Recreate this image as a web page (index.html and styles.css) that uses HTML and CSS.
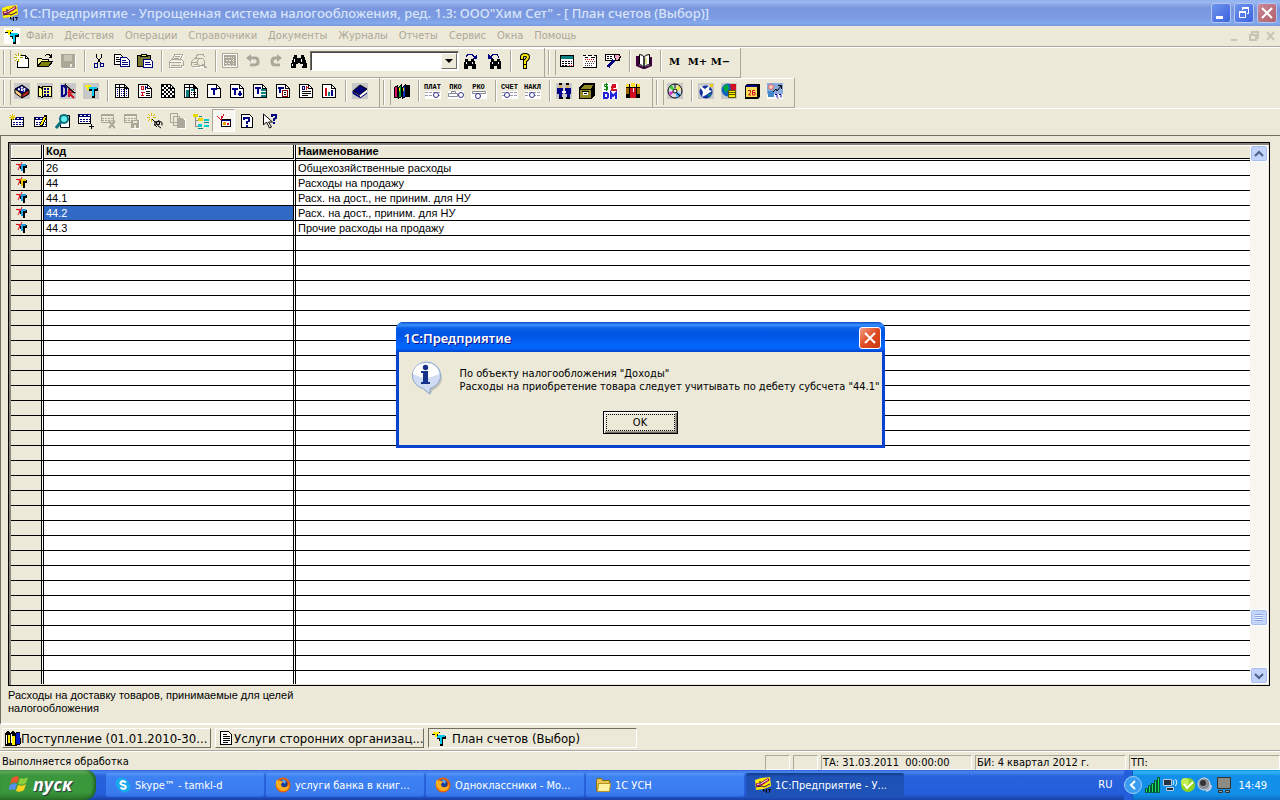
FILE: index.html
```html
<!DOCTYPE html>
<html lang="ru">
<head>
  <meta charset="UTF-8">
  <meta name="viewport" content="width=device-width, initial-scale=1.0">
  <title>1С:Предприятие</title>
  <link rel="stylesheet" href="styles.css">
</head>
<body>

<!-- icon sprite -->
<svg class="sprite" aria-hidden="true">
  <symbol id="logo" viewBox="0 0 16 16"><path fill="#fe0" d="M0 3l6-2 9-1 1 9-7 3-8 1z"/><path stroke="#a01050" stroke-width="3" d="M1 8l5-1 8-5"/><path stroke="#fff" d="M2 7.500l4-1 7-4"/><path stroke="#306" fill="none" d="M1 10l6-1 2 1 6-3M5 4v3"/><path stroke="#000" fill="none" d="M8.500 12v2h2M11.500 16v-4M13 12.500h2.500l-1.500 3"/></symbol>
  <symbol id="acc" viewBox="0 0 16 16"><path fill="#000" d="M6 6h9v3h-3v7H9v-5H8V9H6z"/><path fill="#00c8f0" d="M6 5h8v2h-3v7H9V8H6z"/><path fill="#fe0" d="M2 2h6v2H6v3H4V4H2z"/><path stroke="#000" fill="none" d="M1 4.500h3M6.500 4v2M8 2.500h1"/></symbol>
  <symbol id="new" viewBox="0 0 16 16"><path fill="#fff" stroke="#000" d="M3.500 2.500h8l3 3v9h-11z"/><path fill="none" stroke="#000" d="M11.500 2.500v3h3"/><path fill="#ffffe0" d="M1 2h6v6H1z"/><path stroke="#b0a000" d="M4.500 0v3M4.500 6v3M0 4.500h3M6 4.500h3M1 1l2 2M8 1L6 3M1 8l2-2"/></symbol>
  <symbol id="open" viewBox="0 0 16 16"><path fill="#ff9" stroke="#000" d="M.5 13.500v-8h4l1 1h6v3"/><path fill="#808000" stroke="#000" d="M.5 13.500l4-5h11l-4 5z"/><path fill="none" stroke="#000" d="M8 2.500l2-1h2l2 2M14.500 1v3h-3"/></symbol>
  <symbol id="save" viewBox="0 0 16 16"><path fill="#fff" d="M2 2h14v14H3z"/><path fill="#aca899" d="M1 1h14v14H2l-1-1z"/><path fill="#c8c4b4" d="M4 2h8v6H4z"/><path fill="#ece9d8" d="M10 11h2v3h-2z"/></symbol>
  <symbol id="cut" viewBox="0 0 16 16"><path fill="none" stroke="#000" d="M5.500 1v3l4 6M10.500 1v3l-4 6"/><path fill="none" stroke="#000080" d="M3.500 10.500h3v4h-3zM9.500 10.500h3v3h-3z"/></symbol>
  <symbol id="copy" viewBox="0 0 16 16"><path fill="#fff" stroke="#000" d="M.5 1.500h6l2 2v8h-8z"/><path stroke="#000" d="M2 4.500h3M2 6.500h5M2 8.500h5"/><path fill="#fff" stroke="#000080" d="M6.500 4.500h6l3 3v6h-9z"/><path stroke="#000080" d="M8 7.500h4M8 9.500h6M8 11.500h6"/></symbol>
  <symbol id="paste" viewBox="0 0 16 16"><path fill="#7a7a30" stroke="#000" d="M.5 2.500h13v11H.5z"/><path fill="#ff6" stroke="#000" d="M3.500 3.500v-1l2-1h3l2 1v1z"/><path fill="#fff" stroke="#000080" d="M6.500 6.500h7l2 2v6h-9z"/><path stroke="#000080" d="M8 9.500h5M8 11.500h6"/></symbol>
  <symbol id="print" viewBox="0 0 16 16"><path fill="none" stroke="#fff" d="M5.500 7.500l2-5h8l-2 5M2.500 8.500h12l2 1v4h-3v2h-11z"/><path fill="none" stroke="#aca899" d="M4.500 6.500l2-5h8l-2 5M1.500 8.500l2-2h10l2 2v4h-2v2h-12zM1 9.500h12M3 12.500h9M7 3.500h5M6 5.500h5"/></symbol>
  <symbol id="preview" viewBox="0 0 16 16"><path fill="none" stroke="#fff" d="M2.500 14.500h11"/><path fill="none" stroke="#aca899" d="M4.500 5.500l2-4h6l1 3M.5 12.500v-4l3-3h5M1 9.500h6M1 13.500h8M3 11.500h4"/><circle cx="10" cy="9" r="3.500" fill="none" stroke="#aca899"/><path stroke="#aca899" stroke-width="2" d="M12 11l3 4"/></symbol>
  <symbol id="form" viewBox="0 0 16 16"><path fill="#fff" stroke="#aca899" d="M.5.500h15v14H.5z"/><path fill="#aca899" d="M2 2h12v11H2z"/><path stroke="#ece9d8" stroke-dasharray="2 1" d="M3 4.500h7M4 7.500h7M3 10.500h5M4 12.500h8"/><path stroke="#ece9d8" stroke-dasharray="1 1" d="M11.500 4v8"/></symbol>
  <symbol id="undo" viewBox="0 0 16 16"><path fill="none" stroke="#fff" stroke-width="2" d="M6 6h6v7H5"/><path fill="none" stroke="#aca899" stroke-width="3" d="M5 5h5q3 0 3 3.500T10 12H5"/><path fill="#aca899" d="M1 5l5-4v8z"/></symbol>
  <symbol id="redo" viewBox="0 0 16 16"><path fill="none" stroke="#fff" stroke-width="2" d="M12 13H6"/><path fill="none" stroke="#aca899" stroke-width="3" d="M10 5H7Q4 5 4 8.500T7 12h5"/><path fill="#aca899" d="M14 5L9 1v8z"/></symbol>
  <symbol id="find" viewBox="0 0 16 16"><path d="M3 2h3v3h4V2h3l1 4 2 5v4h-5v-4H9v-1H7v1H5v4H0v-4l2-5z"/><path stroke="#fff" d="M3.500 6v3M10.500 6v3M1.500 11v2M11.500 11v2"/></symbol>
  <symbol id="findnext" viewBox="0 0 16 16"><path d="M2 6h3v2h3V6h3l1 3 1 4v3H9v-3H5v3H1v-4z"/><path stroke="#fff" d="M3.500 9v2M9.500 9v2"/><path fill="none" stroke="#000080" d="M3 3.500l2-2h4l3 3"/><path fill="#000080" d="M14 1v5H9z"/></symbol>
  <symbol id="findprev" viewBox="0 0 16 16"><path d="M5 6h3v2h3V6h3l1 3v7h-4v-3H8v3H4v-4z"/><path stroke="#fff" d="M6.500 9v2M12.500 9v2"/><path fill="none" stroke="#000080" d="M13 4.500l-2-3H7l-3 3"/><path fill="#000080" d="M2 1v5h5z"/></symbol>
  <symbol id="help" viewBox="0 0 16 16"><path fill="none" stroke="#000" stroke-width="4" stroke-linecap="square" d="M5 5V4q0-2 3-2t3 2-3 4v2M8 13v1"/><path fill="none" stroke="#fe0" stroke-width="2" stroke-linecap="square" d="M5 5V4q0-2 3-2t3 2-3 4v2M8 13v1"/></symbol>
  <symbol id="calc" viewBox="0 0 16 16"><path fill="#fff" stroke="#000" d="M1.500 2.500h13v11H1.500z"/><path fill="#0a8080" d="M2 3h12v3H2z"/><path stroke="#000" stroke-dasharray="2 1" d="M3 8.500h10M3 10.500h10M3 12.500h6"/><path stroke="#e00" stroke-dasharray="1 1" d="M10 12.500h4"/></symbol>
  <symbol id="cal" viewBox="0 0 16 16"><path fill="#fff" d="M1 2h14v12H1z"/><path stroke="#000" d="M1 2.500h3M6 2.500h4M12 2.500h3M14.500 3v12M3 4.500h3M9 4.500h4M1 14.500h14"/><path stroke="#444" stroke-dasharray="1 1" d="M4 8.500h9M3 10.500h10M3 12.500h8"/><path stroke="#e00" stroke-dasharray="1 1" d="M3 6.500h10"/></symbol>
  <symbol id="tools" viewBox="0 0 16 16"><path fill="#fff" stroke="#000" d="M.5 1.500h14v6H.5z"/><path stroke="#000" stroke-dasharray="2 1" d="M2 3.500h6M2 5.500h5"/><path fill="#f8a8c8" stroke="#000" d="M9.500 1.500h4l2 2-2 4h-3z"/><path stroke="#000080" stroke-width="3" d="M9 7l-6 7"/></symbol>
  <symbol id="openbook" viewBox="0 0 16 16"><path fill="#400040" d="M0 3h3v9l5 2 6-2V4h2v9l-7 3H7l-7-3z"/><path fill="#fff" stroke="#000" d="M3.500 1.500q4 0 4.500 3v10q-2-3-4.500-3zM8 4.500q1-3 5.500-3v10q-4 0-5.500 3z"/><path stroke="#dd8" stroke-width="2" d="M10 5v6"/></symbol>

  <symbol id="cube" viewBox="0 0 16 16"><path fill="#c8c8c8" d="M0 0h16v16H0z"/><path fill="#008" stroke="#000" d="M1 6l7-4 7 5-7 4z"/><path fill="#fc8" stroke="#000" d="M1 6l7 5v4l-7-5z"/><path fill="#a22" stroke="#000" d="M8 11l7-4v4l-7 4z"/><path stroke="#fff" stroke-width="2" stroke-dasharray="2 1" d="M4 6l7 2M7 4l5 3"/></symbol>
  <symbol id="plan" viewBox="0 0 16 16"><path fill="#c8c8c8" d="M0 0h16v16H0z"/><path fill="#ff8" stroke="#000" d="M1.500 3.500l4 2v9l-4-1zM5.500 3.500h9v10h-9z"/><path stroke="#008" stroke-width="2" stroke-dasharray="2 1" d="M7 6h6M7 9h6M7 12h6"/></symbol>
  <symbol id="oper" viewBox="0 0 16 16"><path fill="#c8c8c8" d="M0 0h16v16H0z"/><path fill="none" stroke="#008" stroke-width="2" d="M2 3v10h2l2-2V5L4 3z"/><path fill="none" stroke="#d01020" stroke-width="2" d="M9 14V7h4v2L9 10l5 5"/><path stroke="#000" stroke-width="2" d="M5 1l10 9"/><path stroke="#fff" d="M6 1l9 8"/></symbol>
  <symbol id="acc2" viewBox="0 0 16 16"><path fill="#c8c8c8" d="M0 0h16v16H0z"/><path fill="#000" d="M6 5h9v3h-3v7H9V8H6z"/><path fill="#00c8f0" d="M6 4h8v2h-3v7H9V6H6z"/><path fill="#fe0" d="M2 2h6v2H6v3H4V4H2z"/></symbol>
  <symbol id="page" viewBox="0 0 16 16"><path fill="#fff" stroke="#000" d="M1.500 1.500h9l4 4v9h-13z"/><path fill="none" stroke="#000" d="M10.500 1.500v4h4"/></symbol>
  <symbol id="r1" viewBox="0 0 16 16"><use href="#page"/><path stroke="#000" d="M2 4.500h12M5.500 2v12M10.500 2v12"/><path stroke="#008" stroke-dasharray="1 1" d="M3.500 6v8M7.500 6v8M9.500 6v8M12.500 6v8"/></symbol>
  <symbol id="r2" viewBox="0 0 16 16"><use href="#page"/><path fill="none" stroke="#d01020" d="M4.500 3v3h2V3zM4 9.500h4M5.500 9v4M4 12.500h3"/><path stroke="#000" d="M9 8.500h4M9 10.500h4M9 12.500h4"/><path stroke="#008" d="M8.500 3v4M9 4.500h2"/></symbol>
  <symbol id="r3" viewBox="0 0 16 16"><use href="#page"/><path stroke="#000" stroke-width="2" stroke-dasharray="2 2" d="M2 3h8M4 5h10M2 7h12M4 9h10M2 11h12M4 13h10"/></symbol>
  <symbol id="r4" viewBox="0 0 16 16"><use href="#page"/><path stroke="#000" d="M2 4.500h12M6.500 2v12M11.500 2v12"/><path fill="#0a8080" d="M3 7h3v7H3zM8 6h3v2H8z"/><path stroke="#000" stroke-dasharray="1 1" d="M8 9.500h6M8 11.500h6"/></symbol>
  <symbol id="r5" viewBox="0 0 16 16"><use href="#page"/><path fill="none" stroke="#008" stroke-width="2" d="M5 6h6M8 6v6"/></symbol>
  <symbol id="r6" viewBox="0 0 16 16"><use href="#page"/><path fill="none" stroke="#008" stroke-width="2" d="M3 6h6M6 6v6M11 8v5M9 11h4"/></symbol>
  <symbol id="r7" viewBox="0 0 16 16"><use href="#page"/><path fill="none" stroke="#008" stroke-width="2" d="M3 5h6M6 5v6"/><path stroke="#0a8080" stroke-width="2" d="M9 7h5M9 10h5M9 13h5"/></symbol>
  <symbol id="r8" viewBox="0 0 16 16"><use href="#page"/><path fill="none" stroke="#008" stroke-width="2" d="M3 5h6M5 5v5"/><path fill="#fff" stroke="#800" d="M7.500 7.500h5v6h-5z"/><path stroke="#000" d="M9 9.500h2M9 11.500h2"/></symbol>
  <symbol id="r9" viewBox="0 0 16 16"><use href="#page"/><path fill="none" stroke="#008" d="M4.500 3v3h2V3z"/><path stroke="#d01020" d="M8.500 3v4M9 4.500h2"/><path stroke="#000" d="M4 8.500h9M4 10.500h9M4 12.500h6"/></symbol>
  <symbol id="r10" viewBox="0 0 16 16"><use href="#page"/><path stroke="#d01020" stroke-width="2" d="M5 5v8"/><path stroke="#0a8080" stroke-width="2" d="M8 9v4"/><path stroke="#008" stroke-width="2" d="M11 7v6"/></symbol>
  <symbol id="book" viewBox="0 0 16 16"><path fill="#c8c8c8" d="M0 0h16v16H0z"/><path fill="#00007a" stroke="#000" d="M1 8l7-6 7 4-7 6z"/><path fill="#fff" d="M8 12l7-5v2l-7 6z"/><path fill="#00007a" d="M0 8l8 5v2L1 11z"/><path stroke="#00007a" d="M8 15l7-5"/></symbol>
  <symbol id="books" viewBox="0 0 16 16"><path fill="#e0106a" stroke="#000" d="M.5 4.500l3-2v12h-3z"/><path fill="#00a030" stroke="#000" d="M4.500 4.500l3-3v12l-3 2z"/><path fill="#1030c0" stroke="#000" d="M8.500 4.500l3-3v12l-3 2z"/><path fill="#000" d="M12 2h4v12h-4z"/><path stroke="#fe0" d="M5.500 5v3M9.500 5v3"/></symbol>
  <symbol id="people" viewBox="0 0 16 16"><path fill="#c8c8c8" d="M0 0h16v16H0z"/><path fill="#008" d="M1 5h6v6H6v5H3v-5H1zM9 5h6v6h-1v5h-3v-5H9z"/><path fill="#d8b060" d="M3 1h3v4H3zM10 1h3v4h-3z"/><path fill="#fff" d="M6 8h4v2H6z"/><path fill="#000" d="M3 0h3v2H3zM10 0h3v2h-3zM3 14h4v2H3zM10 14h4v2h-4z"/></symbol>
  <symbol id="drawer" viewBox="0 0 16 16"><path fill="#000" d="M4 0h12v12l-4 4H0V5z"/><path fill="#908820" d="M1 7h11v8H1zM5 2h9l-2 4H2z"/><path fill="#fff" d="M4 9h5v3H4z"/><path stroke="#000" d="M3 8.500h7M5 10.500h3"/></symbol>
  <symbol id="money" viewBox="0 0 16 16"><path fill="#fff" d="M0 0h16v16H0z"/><path fill="none" stroke="#080" d="M6 1.500H2.500v2h3v3H2M4.500 0v8"/><path fill="none" stroke="#d01020" stroke-width="2" d="M14 2h-3l-1 5h5M9 4h5"/><path fill="none" stroke="#22d" stroke-width="2" d="M2 10v5h3l1-1v-3l-1-1zM9 16v-6l2 3 3-3v6"/></symbol>
  <symbol id="team" viewBox="0 0 16 16"><path fill="#000" d="M1 1h4v3h1V1h4v3h1V1h4v14H1z"/><path fill="#fd3" d="M1 1h3v3H1zM6 0h4v4H6zM12 1h3v3h-3z"/><path fill="#d01020" d="M5 5h6v10H5z"/><path fill="#960" d="M1 5h3v6H1zM12 5h3v6h-3z"/><path stroke="#fff" d="M8.500 5v4"/></symbol>
  <symbol id="disc" viewBox="0 0 16 16"><path fill="#c8c8c8" d="M0 0h16v16H0z"/><circle cx="8" cy="8" r="7" fill="#ddd" stroke="#000"/><path fill="#3c3" d="M8 8L2 5l3-3z"/><path fill="#ee3" d="M8 8l3-6 3 4z"/><path fill="#39f" d="M8 8l6 3-4 4z"/><path fill="#c3c" d="M8 8l-5 5-1-4z"/><circle cx="8" cy="8" r="2" fill="#fff" stroke="#000"/><path stroke="#000" d="M8 1v4M13 13l-3-3"/></symbol>
  <symbol id="globe" viewBox="0 0 16 16"><path fill="#c8c8c8" d="M0 0h16v16H0z"/><circle cx="8" cy="9" r="6.500" fill="#1030a0"/><path fill="#fff" d="M1 2l6 4 5-4-1 5 3 1-6 4-4 2 1-5z"/><path fill="#0a8080" d="M9 12l5-2-3 5z"/><path fill="#ec0" d="M12 1h3v3h-3z"/></symbol>
  <symbol id="globe2" viewBox="0 0 16 16"><path fill="#c8c8c8" d="M0 0h16v16H0z"/><circle cx="7" cy="7" r="6.500" fill="#1060c0"/><path fill="#0a3" d="M2 4l4-3 2 4-3 5z"/><path fill="#d01020" d="M9 1h6v6h-5z"/><path fill="#fe0" stroke="#550" d="M7.500 7.500h7v7h-7z"/><path stroke="#550" d="M8 9.500h6M8 11.500h6"/></symbol>
  <symbol id="date" viewBox="0 0 16 16"><path fill="#000" d="M3 1h13v13l-2 2H1V3z"/><path fill="#fd5" d="M2 4h11v10H2z"/><path fill="#008" d="M2 2h11v2H2z"/><path fill="none" stroke="#d01020" d="M4 7.500h2.500v2L4.500 12H7M11 7.500H8.500V12H11V9.500H9"/></symbol>
  <symbol id="upd" viewBox="0 0 16 16"><path fill="#8ad" d="M0 0h16v11H0z"/><path fill="#fff" d="M0 11h16v5H0z"/><circle cx="4" cy="4" r="2.500" fill="#fcb" stroke="#d66"/><path fill="#48c" d="M1 8h6v6H1z"/><path fill="none" stroke="#000" d="M6 9l3-3 1 2 4-5M11 2.500h3.500V6"/><path fill="none" stroke="#008" d="M8 11.500h2v3M12 11.500h2v3M11 14.500v1"/></symbol>

  <symbol id="sheet" viewBox="0 0 16 16"><path fill="#fff" stroke="#000" d="M2.500 4.500h12v9h-12z"/><path fill="#00007a" d="M3 4h11v3H3z"/><path stroke="#fff" stroke-dasharray="2 2" d="M4 5.500h10"/><path stroke="#008" stroke-dasharray="2 1" d="M4 9.500h10M4 11.500h10"/></symbol>
  <symbol id="t1" viewBox="0 0 16 16"><use href="#sheet"/><path stroke="#e0c800" d="M3.500 1v6M0 4.500h7M1 2l5 5M6 2L1 7"/></symbol>
  <symbol id="t2" viewBox="0 0 16 16"><use href="#sheet"/><path stroke="#000" stroke-width="3" d="M14 2l-5 11"/><path stroke="#fe0" stroke-width="2" d="M13 4l-4 8"/></symbol>
  <symbol id="t3" viewBox="0 0 16 16"><path fill="#fff" stroke="#000" d="M5.500 2.500h9v12h-9z"/><circle cx="9" cy="6" r="4" fill="#6ee" stroke="#0a7080" stroke-width="2"/><path stroke="#0a7080" stroke-width="3" d="M6 9l-5 6"/></symbol>
  <symbol id="t4" viewBox="0 0 16 16"><path fill="#fff" stroke="#000" d="M.5 1.500h12v9H.5z"/><path fill="#00007a" d="M1 1h12v3H1z"/><path stroke="#fff" stroke-dasharray="2 2" d="M2 2.500h10"/><path stroke="#008" stroke-dasharray="2 1" d="M2 6.500h10M2 8.500h10"/><path stroke="#000" d="M11 13.500h5M13.500 11v5"/></symbol>
  <symbol id="t5" viewBox="0 0 16 16"><path fill="#ece9d8" stroke="#aca899" d="M.5 1.500h12v8H.5z"/><path stroke="#aca899" d="M1 2.500h11"/><path stroke="#aca899" stroke-dasharray="2 1" d="M1 5.500h11M1 7.500h11"/><path stroke="#fff" d="M9 8l7 7"/><path stroke="#aca899" stroke-width="2" d="M8 8l6 7M14 8l-6 7"/></symbol>
  <symbol id="t6" viewBox="0 0 16 16"><path fill="#ece9d8" stroke="#aca899" d="M.5 1.500h12v8H.5z"/><path stroke="#aca899" d="M1 2.500h11"/><path stroke="#aca899" stroke-dasharray="2 1" d="M1 5.500h11M1 7.500h11"/><path fill="#fff" d="M8 8h8v8H8z"/><path fill="#aca899" d="M7 7h8v8H7z"/><path fill="#ece9d8" d="M9 8h4v2H9zM10 12h2v3h-2z"/></symbol>
  <symbol id="t7" viewBox="0 0 16 16"><path stroke="#d8c000" d="M4.500 0v3M4.500 6v3M0 4.500h3M6 4.500h3M1 1l2 2M8 1L6 3M1 8l2-2"/><path fill="none" stroke="#000" d="M5 6l3 3 3 1v3l3 2M8 8v5M11 7.500l4 2v3M7 11l3 3"/><path fill="#bbb" stroke="#000" d="M9.500 8.500h3v3h-3z"/></symbol>
  <symbol id="t8" viewBox="0 0 16 16"><path fill="#ece9d8" stroke="#aca899" d="M.5.500h7v9h-7zM3.500 3.500h6v9h-6z"/><path fill="#fff" d="M8 6h9v10H8z"/><path fill="#aca899" d="M7 5h5l3 3v7H7z"/></symbol>
  <symbol id="t9" viewBox="0 0 16 16"><path stroke="#888" fill="none" d="M2.500 3v10h3M2 7.500h3"/><path fill="#e8d800" d="M0 1h5v3H0zM5 5h5v3H5z"/><path fill="#0cc" d="M11 6h5v2h-5zM5 11h4v3H5zM11 12h5v2h-5z"/><path stroke="#0a8080" d="M6 3.500h3M11 9.500h5M5 15.500h5"/></symbol>
  <symbol id="t10" viewBox="0 0 16 16"><path fill="#fff" stroke="#000" stroke-width="1" d="M5.500 6.500h9v7h-9z"/><path stroke="#000080" d="M5 7.500h10"/><path fill="#e8a000" d="M7 9h3v3H7z"/><path fill="#d01020" d="M11 10h2v2h-2z"/><path fill="none" stroke="#d01020" d="M1 3l4 4 3-6M5.500 3v4"/></symbol>
  <symbol id="t11" viewBox="0 0 16 16"><path fill="#fff" stroke="#000" d="M2.500 1.500h8l3 3v10h-11z"/><path fill="none" stroke="#000080" stroke-width="2" d="M5 7V5h5v3L8 9v2M8 12v2"/></symbol>
  <symbol id="t12" viewBox="0 0 16 16"><path fill="#fff" stroke="#000" d="M1.500 1v11l3-3 3 6 2-1-3-5h4z"/><path fill="none" stroke="#000080" stroke-width="2" d="M10 4V2h4v3l-2 1v2M12 9v2"/></symbol>

  <symbol id="row" viewBox="0 0 12 12"><path fill="#000" d="M6 3h5v3H9v5H7V6H6z"/><path fill="currentColor" d="M5 2h5v2H7v5H5z"/><path stroke="#e01020" fill="none" d="M0 2.500h4M1 2l3 2-2 4M6 0L3 6"/><path stroke="#000" d="M4.500 4v3"/></symbol>
  <symbol id="doc" viewBox="0 0 16 16"><path fill="#fff" stroke="#000" d="M2.500 1.500h8l3 3v10h-11z"/><path stroke="#000" d="M5 4.500h4M5 6.500h7M5 8.500h7M5 10.500h7M5 12.500h5"/></symbol>
  <symbol id="docs" viewBox="0 0 16 16"><path fill="#000" d="M0 3l3-2 2 2 3-2 3 3V2h4l1 12-5 2H0z"/><path fill="#fe0" d="M3 5h2v8H3zM7 6h3v9H7z"/><path fill="#0018c0" d="M11 3h4v11h-4z"/><path stroke="#fff" d="M1.500 5v9M6.500 4v9"/></symbol>
  <symbol id="flag" viewBox="0 0 20 20"><path fill="#f0562c" d="M3 4q4-3 7-1L8 9q-4-2-7 1z"/><path fill="#8ccf3c" d="M11 4q4 2 8-1l-2 6q-4 3-8 1z"/><path fill="#5590f0" d="M1 11q4-3 7-1l-2 6q-3-2-7 1z"/><path fill="#ffd21c" d="M9 11q4 2 8-1l-2 6q-4 3-8 1z"/></symbol>
  <symbol id="skype" viewBox="0 0 16 16"><circle cx="6" cy="6" r="5.500" fill="#19a8ee"/><circle cx="10" cy="10" r="5.500" fill="#19a8ee"/><circle cx="8" cy="8" r="6.500" fill="#19a8ee"/><path fill="none" stroke="#fff" stroke-width="2" d="M11 5.500Q8 3 6 5t2 3 2.500 3-5-.5"/></symbol>
  <symbol id="fox" viewBox="0 0 16 16"><circle cx="8" cy="8" r="7.500" fill="#e66000"/><circle cx="8" cy="7" r="4.500" fill="#1c3f94"/><path fill="#ffb020" d="M1 4q2-2 3 0 3-1 4 1L6 7q0 4 5 3 3-1 3-4 1 7-5 8-6 0-8-6z"/><path fill="#6fb4f0" d="M7 2l4 2-1 3-2-2z"/></symbol>
  <symbol id="folder" viewBox="0 0 16 16"><path fill="#e8c850" stroke="#8a6a10" d="M1.500 3.500l1-2h4l1 2h7v10h-13z"/><path fill="#fff2a0" stroke="#b89020" d="M3.500 6.500h12l-1 8h-12z"/></symbol>
  <symbol id="info" viewBox="0 0 34 34"><path fill="#888" opacity=".4" d="M20 4a14 13 0 0 1 3 25l-3 5-6-5z"/><path fill="#cfdcf4" stroke="#8ea6cc" d="M16 1a14.500 13.500 0 0 1 4 26.500L20 33l-7-5.500A14.500 13.500 0 0 1 16 1z"/><path fill="#fff" d="M16 2a13 11 0 0 1 13 11q-13 7-26 0A13 11 0 0 1 16 2z"/><circle cx="15.500" cy="6.500" r="2.700" fill="#16338c"/><path fill="#16338c" d="M11 10h7v11h2v2h-9v-2h2v-9h-2z"/></symbol>
</svg>

<header class="titlebar">
  <svg class="ico smooth"><use href="#logo"/></svg>
  <h1>1С:Предприятие - Упрощенная система налогообложения, ред. 1.3: ООО"Хим Сет" - [ План счетов (Выбор)]</h1>
  <div class="win-buttons">
    <button class="win-btn" aria-label="Свернуть"><svg viewBox="0 0 18 18"><path stroke="#fff" stroke-width="3" d="M4 13.500h7"/></svg></button>
    <button class="win-btn" aria-label="Восстановить"><svg viewBox="0 0 18 18"><path fill="none" stroke="#fff" d="M7.500 6V4.500h6v5H12M4.500 8.500h6v5h-6z"/><path stroke="#fff" stroke-width="2" d="M7 4h7M4 8h7"/></svg></button>
    <button class="win-btn win-close" aria-label="Закрыть"><svg viewBox="0 0 18 18"><path stroke="#fff" stroke-width="2" d="M4 4l10 10M14 4L4 14"/></svg></button>
  </div>
</header>

<nav class="menubar">
  <span class="menu-icon"><svg class="ico"><use href="#acc"/></svg></span>
  <button>Файл</button>
  <button>Действия</button>
  <button>Операции</button>
  <button>Справочники</button>
  <button>Документы</button>
  <button>Журналы</button>
  <button>Отчеты</button>
  <button>Сервис</button>
  <button>Окна</button>
  <button>Помощь</button>
  <svg class="mdi-buttons" viewBox="0 0 48 12"><path fill="none" stroke="#c9c5b2" stroke-width="2" d="M3 10h6M22 5h6v5h-6zM24 4V2h6v6h-2M39 2l7 8M46 2l-7 8"/></svg>
</nav>

<div class="toolbar">
  <div class="band">
    <button title="Новый"><svg class="ico"><use href="#new"/></svg></button>
    <button title="Открыть"><svg class="ico"><use href="#open"/></svg></button>
    <button title="Сохранить" disabled><svg class="ico"><use href="#save"/></svg></button>
    <i class="sep"></i>
    <button title="Вырезать"><svg class="ico"><use href="#cut"/></svg></button>
    <button title="Копировать"><svg class="ico"><use href="#copy"/></svg></button>
    <button title="Вставить"><svg class="ico"><use href="#paste"/></svg></button>
    <i class="sep"></i>
    <button title="Печать" disabled><svg class="ico"><use href="#print"/></svg></button>
    <button title="Просмотр" disabled><svg class="ico"><use href="#preview"/></svg></button>
    <i class="sep"></i>
    <button title="Свойства" disabled><svg class="ico"><use href="#form"/></svg></button>
    <button title="Отменить" disabled><svg class="ico smooth"><use href="#undo"/></svg></button>
    <button title="Вернуть" disabled><svg class="ico smooth"><use href="#redo"/></svg></button>
    <button title="Найти"><svg class="ico"><use href="#find"/></svg></button>
    <div class="combo">
      <select aria-label="Строка поиска"><option></option></select>
      <span class="combo-arrow"></span>
    </div>
    <button title="Найти следующий"><svg class="ico"><use href="#findnext"/></svg></button>
    <button title="Найти предыдущий"><svg class="ico"><use href="#findprev"/></svg></button>
    <i class="sep"></i>
    <button title="Справка"><svg class="ico smooth"><use href="#help"/></svg></button>
  </div>
  <div class="band">
    <button title="Калькулятор"><svg class="ico"><use href="#calc"/></svg></button>
    <button title="Календарь"><svg class="ico"><use href="#cal"/></svg></button>
    <button title="Табло"><svg class="ico"><use href="#tools"/></svg></button>
    <i class="sep"></i>
    <button title="Описание"><svg class="ico smooth"><use href="#openbook"/></svg></button>
    <i class="sep"></i>
    <button class="mem">M</button>
    <button class="mem">M+</button>
    <button class="mem">M−</button>
  </div>
</div>

<div class="toolbar">
  <div class="band">
    <button title="Журнал операций"><svg class="ico smooth"><use href="#cube"/></svg></button>
    <button title="Журнал проводок"><svg class="ico"><use href="#plan"/></svg></button>
    <button title="Ввести операцию"><svg class="ico smooth"><use href="#oper"/></svg></button>
    <button title="План счетов"><svg class="ico"><use href="#acc2"/></svg></button>
    <i class="sep"></i>
    <button title="Оборотно-сальдовая ведомость"><svg class="ico"><use href="#r1"/></svg></button>
    <button title="Сводные проводки"><svg class="ico"><use href="#r2"/></svg></button>
    <button title="Шахматка"><svg class="ico"><use href="#r3"/></svg></button>
    <button title="Ведомость по счету"><svg class="ico"><use href="#r4"/></svg></button>
    <button title="Обороты счета"><svg class="ico"><use href="#r5"/></svg></button>
    <button title="Анализ счета"><svg class="ico"><use href="#r6"/></svg></button>
    <button title="Анализ по субконто"><svg class="ico"><use href="#r7"/></svg></button>
    <button title="Карточка счета"><svg class="ico"><use href="#r8"/></svg></button>
    <button title="Отчет по проводкам"><svg class="ico"><use href="#r9"/></svg></button>
    <button title="Диаграмма"><svg class="ico"><use href="#r10"/></svg></button>
    <i class="sep"></i>
    <button title="Книга"><svg class="ico smooth"><use href="#book"/></svg></button>
  </div>
  <div class="band">
    <button title="Журналы"><svg class="ico"><use href="#books"/></svg></button>
    <i class="sep"></i>
    <button class="word"><span>ПЛАТ</span><svg viewBox="0 0 16 8"><path stroke="#99a" stroke-dasharray="3 1" d="M0 1.500h16M0 4.500h16"/><circle cx="11" cy="4" r="2.500" fill="#fff" stroke="#338"/></svg></button>
    <button class="word"><span>ПКО</span><svg viewBox="0 0 16 8"><path fill="#fff" stroke="#889" d="M3.500 2.500v-2h4v2M.5 2.500h9v3h-9z"/><circle cx="13" cy="4" r="2.500" fill="#fff" stroke="#338"/></svg></button>
    <button class="word"><span>РКО</span><svg viewBox="0 0 16 8"><path fill="#fff" stroke="#889" d="M1.500.5h13v2h-13z"/><circle cx="7" cy="5" r="2.500" fill="#fff" stroke="#338"/></svg></button>
    <i class="sep"></i>
    <button class="word"><span>СЧЕТ</span><svg viewBox="0 0 16 8"><path stroke="#99a" stroke-dasharray="3 1" d="M0 1.500h16M0 4.500h16"/><circle cx="5" cy="4" r="2.500" fill="#fff" stroke="#338"/></svg></button>
    <button class="word"><span>НАКЛ</span><svg viewBox="0 0 16 8"><path stroke="#99a" stroke-dasharray="3 1" d="M0 1.500h16M0 4.500h16"/><circle cx="7" cy="4" r="2.500" fill="#fff" stroke="#338"/></svg></button>
    <i class="sep"></i>
    <button title="Контрагенты"><svg class="ico"><use href="#people"/></svg></button>
    <button title="Номенклатура"><svg class="ico"><use href="#drawer"/></svg></button>
    <button title="Валюты"><svg class="ico smooth"><use href="#money"/></svg></button>
    <button title="Сотрудники"><svg class="ico"><use href="#team"/></svg></button>
  </div>
  <div class="band">
    <button title="ИТС"><svg class="ico smooth"><use href="#disc"/></svg></button>
    <i class="sep"></i>
    <button title="Интернет"><svg class="ico smooth"><use href="#globe"/></svg></button>
    <button title="Курсы"><svg class="ico smooth"><use href="#globe2"/></svg></button>
    <button title="Календарь бухгалтера"><svg class="ico smooth"><use href="#date"/></svg></button>
    <button title="Обновление"><svg class="ico smooth"><use href="#upd"/></svg></button>
  </div>
</div>

<div class="toolbar toolbar-window">
  <button title="Новая строка"><svg class="ico"><use href="#t1"/></svg></button>
  <button title="Изменить"><svg class="ico"><use href="#t2"/></svg></button>
  <button title="Просмотр"><svg class="ico smooth"><use href="#t3"/></svg></button>
  <button title="Копировать строку"><svg class="ico"><use href="#t4"/></svg></button>
  <button title="Удалить" disabled><svg class="ico smooth"><use href="#t5"/></svg></button>
  <button title="Записать" disabled><svg class="ico"><use href="#t6"/></svg></button>
  <button title="Новая группа"><svg class="ico smooth"><use href="#t7"/></svg></button>
  <button title="Перенести" disabled><svg class="ico"><use href="#t8"/></svg></button>
  <button title="Иерархия"><svg class="ico"><use href="#t9"/></svg></button>
  <button title="Выбор" class="pressed"><svg class="ico"><use href="#t10"/></svg></button>
  <button title="Описание"><svg class="ico"><use href="#t11"/></svg></button>
  <button title="Что это?"><svg class="ico smooth"><use href="#t12"/></svg></button>
</div>

<main class="client">
  <div class="grid">
    <div class="grid-body">
      <table>
        <thead>
          <tr><th class="mark"></th><th class="code">Код</th><th>Наименование</th></tr>
        </thead>
        <tbody>
          <tr><td><svg class="row-ico"><use href="#row"/></svg></td><td>26</td><td>Общехозяйственные расходы</td></tr>
          <tr><td><svg class="row-ico group"><use href="#row"/></svg></td><td>44</td><td>Расходы на продажу</td></tr>
          <tr><td><svg class="row-ico"><use href="#row"/></svg></td><td>44.1</td><td>Расх. на дост., не приним. для НУ</td></tr>
          <tr><td><svg class="row-ico"><use href="#row"/></svg></td><td class="selected">44.2</td><td>Расх. на дост., приним. для НУ</td></tr>
          <tr><td><svg class="row-ico"><use href="#row"/></svg></td><td>44.3</td><td>Прочие расходы на продажу</td></tr>
          <tr><td></td><td></td><td></td></tr>
          <tr><td></td><td></td><td></td></tr>
          <tr><td></td><td></td><td></td></tr>
          <tr><td></td><td></td><td></td></tr>
          <tr><td></td><td></td><td></td></tr>
          <tr><td></td><td></td><td></td></tr>
          <tr><td></td><td></td><td></td></tr>
          <tr><td></td><td></td><td></td></tr>
          <tr><td></td><td></td><td></td></tr>
          <tr><td></td><td></td><td></td></tr>
          <tr><td></td><td></td><td></td></tr>
          <tr><td></td><td></td><td></td></tr>
          <tr><td></td><td></td><td></td></tr>
          <tr><td></td><td></td><td></td></tr>
          <tr><td></td><td></td><td></td></tr>
          <tr><td></td><td></td><td></td></tr>
          <tr><td></td><td></td><td></td></tr>
          <tr><td></td><td></td><td></td></tr>
          <tr><td></td><td></td><td></td></tr>
          <tr><td></td><td></td><td></td></tr>
          <tr><td></td><td></td><td></td></tr>
          <tr><td></td><td></td><td></td></tr>
          <tr><td></td><td></td><td></td></tr>
          <tr><td></td><td></td><td></td></tr>
          <tr><td></td><td></td><td></td></tr>
          <tr><td></td><td></td><td></td></tr>
          <tr><td></td><td></td><td></td></tr>
          <tr><td></td><td></td><td></td></tr>
          <tr><td></td><td></td><td></td></tr>
          <tr><td></td><td></td><td></td></tr>
        </tbody>
      </table>
    </div>
    <div class="scrollbar">
      <button aria-label="Вверх"><svg viewBox="0 0 16 16"><path fill="none" stroke="#4d6185" stroke-width="2" d="M4 10l4-4 4 4"/></svg></button>
      <div class="scroll-track"></div>
      <div class="scroll-thumb"></div>
      <div class="scroll-rest"></div>
      <button aria-label="Вниз"><svg viewBox="0 0 16 16"><path fill="none" stroke="#4d6185" stroke-width="2" d="M4 6l4 4 4-4"/></svg></button>
    </div>
  </div>
  <p class="hint">Расходы на доставку товаров, принимаемые для целей налогообложения</p>
</main>

<div class="window-tabs">
  <button><svg class="ico"><use href="#docs"/></svg><span>Поступление (01.01.2010-30...</span></button>
  <button><svg class="ico"><use href="#doc"/></svg><span>Услуги сторонних организац...</span></button>
  <button class="active"><svg class="ico"><use href="#acc"/></svg><span>План счетов (Выбор)</span></button>
</div>

<div class="statusbar">
  <span class="status-text">Выполняется обработка</span>
  <span class="pane small"></span>
  <span class="pane small"></span>
  <span class="pane">ТА: 31.03.2011&nbsp; 00:00:00</span>
  <span class="pane">БИ: 4 квартал 2012 г.</span>
  <span class="pane">ТП:</span>
</div>

<footer class="taskbar">
  <button class="start"><svg viewBox="0 0 20 20"><use href="#flag"/></svg>пуск</button>
  <div class="tasks">
    <button><svg class="ico smooth"><use href="#skype"/></svg><span>Skype™ - tamkl-d</span></button>
    <button><svg class="ico smooth"><use href="#fox"/></svg><span>услуги банка в книг...</span></button>
    <button><svg class="ico smooth"><use href="#fox"/></svg><span>Одноклассники - Mo...</span></button>
    <button><svg class="ico smooth"><use href="#folder"/></svg><span>1С УСН</span></button>
    <button class="active"><svg class="ico smooth"><use href="#logo"/></svg><span>1С:Предприятие - У...</span></button>
  </div>
  <span class="lang">RU</span>
  <div class="tray">
    <button class="tray-arrow" aria-label="Скрыть"><svg viewBox="0 0 18 18"><circle cx="9" cy="9" r="8.500" fill="#3a9cf0" stroke="#9fd0fa"/><path fill="none" stroke="#fff" stroke-width="2" d="M11 5L7 9l4 4"/></svg></button>
    <svg class="tray-icons" viewBox="0 0 88 18">
      <path fill="#1fe05a" stroke="#053" d="M1.500 12.500h2v4h-2zM4.500 9.500h2v7h-2zM7.500 7.500h2v9h-2zM10.500 4.500h2v12h-2zM13.500 1.500h2v15h-2z"/>
      <path fill="#234" stroke="#bcd" d="M19.500 3.500h8v6h-8zM22.500 11.500h7v3h-7z"/><path fill="none" stroke="#e8f4ff" d="M29 4q2 2 0 5M31.500 3q3 3 0 7"/>
      <circle cx="44" cy="9" r="7" fill="#8fd320"/><circle cx="41" cy="6" r="4" fill="#c3ee50"/><path fill="none" stroke="#fff" stroke-width="2" d="M40 8l3 4 6-6"/>
      <circle cx="60" cy="8" r="6" fill="#8a8f96" stroke="#dde"/><circle cx="59" cy="7" r="3" fill="#333"/><path fill="none" stroke="#ccd" stroke-width="2" d="M62 15q5-1 5-6"/>
      <path fill="#8c8c84" stroke="#333" d="M73.500 1.500h13v11h-13z"/><path fill="#999" stroke="#333" d="M74.500 14.500h4v2h-4zM81.500 14.500h4v2h-4z"/>
    </svg>
    <time>14:49</time>
  </div>
</footer>

<div class="overlay">
  <div class="dialog" role="alertdialog" aria-labelledby="dlgTitle">
    <div class="dialog-title">
      <h2 id="dlgTitle">1С:Предприятие</h2>
      <button class="dialog-close" aria-label="Закрыть"><svg viewBox="0 0 18 18"><path stroke="#fff" stroke-width="2" d="M4 4l10 10M14 4L4 14"/></svg></button>
    </div>
    <div class="dialog-body">
      <div class="message">
        <svg class="info"><use href="#info"/></svg>
        <p>По объекту налогообложения "Доходы"<br>Расходы на приобретение товара следует учитывать по дебету субсчета "44.1"</p>
      </div>
      <button class="ok"><span>OK</span></button>
    </div>
  </div>
</div>

</body>
</html>
```

FILE: styles.css
```css
:root {
  --face: #ece9d8;
  --shadow: #aca899;
  --dark: #716f64;
  --ui: "DejaVu Sans Condensed", "DejaVu Sans", sans-serif;
  --caption: "Noto Sans", sans-serif;
}

* {
  margin: 0;
  padding: 0;
  box-sizing: border-box;
}

body {
  height: 100vh;
  display: flex;
  flex-direction: column;
  overflow: hidden;
  background: var(--face);
  font-family: var(--ui);
  font-size: 11px;
  color: #000;
}

button {
  border: none;
  background: none;
  font: inherit;
  color: inherit;
}

svg {
  display: block;
  flex: none;
}

.sprite {
  position: absolute;
  width: 0;
  height: 0;
}

.ico {
  width: 16px;
  height: 16px;
  shape-rendering: crispEdges;
}

.smooth {
  shape-rendering: auto;
}

/* title bar */
.titlebar {
  height: 26px;
  flex: none;
  display: flex;
  align-items: center;
  gap: 4px;
  padding: 0 3px 0 2px;
  background: linear-gradient(#8fb0f0 0, #9db9f0 2px, #7a96df 8px, #7b9be3 18px, #84a9ec 23px, #7a96df 26px);
}

.titlebar h1 {
  flex: 1;
  font-family: var(--caption);
  font-size: 13px;
  font-weight: 500;
  color: #d8e4f8;
  white-space: nowrap;
}

.win-buttons {
  display: flex;
  gap: 3px;
}

.win-btn {
  width: 20px;
  height: 20px;
  border: 1px solid #b4c6f2;
  border-radius: 3px;
  background: linear-gradient(135deg, #6f94ec, #3b63e0);
}

.win-close {
  background: linear-gradient(135deg, #c98a94, #b0606c);
}

/* menu */
.menubar {
  height: 22px;
  flex: none;
  display: flex;
  align-items: center;
  gap: 11px;
  padding: 0 4px 2px;
  color: var(--shadow);
  border-bottom: 1px solid #fff;
  box-shadow: inset 0 -1px var(--shadow);
}

.menu-icon {
  width: 16px;
  margin-right: -5px;
  background: #fff;
}

.mdi-buttons {
  width: 48px;
  height: 12px;
  margin-left: auto;
}

/* toolbars */
.toolbar {
  height: 30px;
  flex: none;
  display: flex;
}

.toolbar button {
  width: 23px;
  height: 23px;
  display: flex;
  align-items: center;
  justify-content: center;
}

.band {
  position: relative;
  display: flex;
  align-items: center;
  padding: 0 8px 3px 10px;
  border-right: 1px solid var(--shadow);
  border-bottom: 1px solid var(--shadow);
  box-shadow: inset 0 1px #fff;
}

.band::before {
  content: "";
  position: absolute;
  left: 3px;
  top: 2px;
  bottom: 2px;
  width: 6px;
  border: solid var(--shadow);
  border-width: 0 1px;
  background: linear-gradient(90deg, #fff 1px, transparent 1px);
}

.sep {
  width: 8px;
  height: 22px;
  background: linear-gradient(90deg, transparent 5px, var(--shadow) 5px, var(--shadow) 6px, #fff 6px, #fff 7px, transparent 7px);
}

.combo {
  position: relative;
  width: 149px;
  height: 20px;
}

.combo select {
  appearance: none;
  width: 100%;
  height: 100%;
  border: 1px solid;
  border-color: var(--dark) #fff #fff var(--dark);
  box-shadow: inset 1px 1px #444;
  border-radius: 0;
  background: #fff;
}

.combo-arrow {
  position: absolute;
  right: 2px;
  top: 2px;
  width: 16px;
  height: 16px;
  border: 1px solid;
  border-color: #fff var(--dark) var(--dark) #fff;
  background: var(--face);
  pointer-events: none;
}

.combo-arrow::after {
  content: "";
  position: absolute;
  left: 3px;
  top: 5px;
  border: 4px solid transparent;
  border-top-color: #000;
  border-bottom: none;
}

.toolbar .mem {
  font-family: "DejaVu Serif", serif;
  font-size: 10px;
  font-weight: bold;
}

.toolbar .word {
  flex-direction: column;
  justify-content: center;
  font-family: "Liberation Mono", monospace;
  font-size: 7px;
  font-weight: bold;
  line-height: 8px;
}

.word svg {
  width: 16px;
  height: 8px;
  background: #fff;
}

.toolbar-window {
  height: 27px;
  padding: 0 5px;
  border-top: 1px solid #fff;
}

.toolbar .pressed {
  border: 1px solid;
  border-color: var(--shadow) #fff #fff var(--shadow);
  background: #f7f6f0;
}

/* client area */
.client {
  flex: 1;
  min-height: 0;
  display: flex;
  flex-direction: column;
  padding: 6px 10px 8px 7px;
  border: solid var(--dark);
  border-width: 1px 0 0 1px;
  border-bottom: 2px solid #fff;
}

.grid {
  flex: 1;
  min-height: 0;
  display: flex;
  border: 1px solid #000;
  box-shadow: inset 2px 2px #85837a;
  padding: 2px 1px 1px 2px;
}

.grid-body {
  flex: 1;
  min-width: 0;
  overflow: hidden;
  background: #fff;
}

table {
  width: 100%;
  table-layout: fixed;
  border-spacing: 0;
  font-family: "Liberation Sans", Arial, sans-serif;
  font-size: 11px;
  line-height: 14px;
}

th, td {
  height: 15px;
  padding: 0 2px;
  border-right: 3px double #000;
  border-bottom: 1px solid #000;
  background-clip: padding-box;
  text-align: left;
  white-space: nowrap;
}

th {
  height: 16px;
  line-height: 13px;
  border-bottom: 3px double #000;
  background-color: var(--face);
  box-shadow: inset 1px 1px #fff;
}

th:last-child, td:last-child {
  border-right: none;
}

td:first-child {
  background-color: var(--face);
}

.mark {
  width: 33px;
}

.code {
  width: 252px;
}

.selected {
  background-color: #316ac5;
  color: #fff;
}

.row-ico {
  width: 12px;
  height: 12px;
  margin-left: 3px;
  color: #20a0e0;
}

.group {
  color: #e8c800;
}

.scrollbar {
  width: 18px;
  display: flex;
  flex-direction: column;
  background: #f7f6f0;
}

.scrollbar button, .scroll-thumb {
  height: 17px;
  border: 1px solid #fff;
  border-radius: 3px;
  background: #c3d3fb;
  box-shadow: inset 0 0 0 1px #a8bcee;
}

.scroll-thumb {
  padding: 4px;
}

.scroll-thumb::before {
  content: "";
  display: block;
  height: 7px;
  background: repeating-linear-gradient(#8ba3e0 0, #8ba3e0 1px, #eef4fe 1px, #eef4fe 2px);
}

.scroll-track {
  flex: 11;
}

.scroll-rest {
  flex: 1;
}

.hint {
  width: 300px;
  margin-top: 3px;
  font-family: "Liberation Sans", Arial, sans-serif;
  font-size: 11px;
  line-height: 13px;
}

/* open windows */
.window-tabs {
  height: 26px;
  flex: none;
  display: flex;
  gap: 4px;
  padding: 3px 2px 2px;
  border-bottom: 1px solid var(--shadow);
}

.window-tabs button {
  width: 209px;
  display: flex;
  align-items: center;
  padding-left: 2px;
  border: 1px solid;
  border-color: #fff var(--dark) var(--dark) #fff;
  font-size: 13px;
  white-space: nowrap;
}

.window-tabs .active {
  gap: 5px;
  border-color: var(--dark) #fff #fff var(--dark);
}

/* status bar */
.statusbar {
  height: 19px;
  flex: none;
  display: flex;
  gap: 3px;
  padding: 3px 0 0 2px;
  border-top: 1px solid #fff;
  line-height: 14px;
}

.status-text {
  flex: 1;
}

.pane {
  width: 151px;
  padding-left: 1px;
  border: 1px solid;
  border-color: var(--shadow) #fff #fff var(--shadow);
  line-height: 13px;
}

.small {
  width: 25px;
}

/* taskbar */
.taskbar {
  height: 30px;
  flex: none;
  display: flex;
  align-items: stretch;
  background: linear-gradient(#2a62d8 0, #4a86f0 2px, #2a62dc 6px, #245edb 24px, #1941a5 30px);
  color: #fff;
}

.start {
  width: 96px;
  display: flex;
  align-items: center;
  gap: 4px;
  padding: 0 9px 2px;
  border-radius: 0 10px 12px 0;
  background: linear-gradient(#6cb76a 0, #3c963c 5px, #3a983a 22px, #2a742a 30px);
  box-shadow: inset -2px 0 3px #1f5f1f;
  font-family: "Open Sans", sans-serif;
  font-size: 18px;
  font-weight: bold;
  font-style: italic;
  color: #fff;
  text-shadow: 1px 1px 1px #234;
}

.start svg {
  width: 20px;
  height: 20px;
}

.tasks {
  flex: 1;
  display: flex;
  gap: 2px;
  padding: 3px 0 3px 10px;
}

.tasks button {
  width: 158px;
  display: flex;
  align-items: center;
  gap: 4px;
  padding: 0 9px;
  border-radius: 2px;
  background: linear-gradient(#5a95f8 0, #3c81f3 4px, #3a7cf0 20px, #2f6be0 24px);
  white-space: nowrap;
}

.tasks .active {
  background: linear-gradient(#153c8c 0, #1e52b7 4px, #1e52b7 24px);
}

.lang {
  padding-right: 12px;
  line-height: 30px;
}

.tray {
  display: flex;
  align-items: center;
  padding-right: 13px;
  background: linear-gradient(90deg, transparent 8px, #0b5cc0 8px, #0b5cc0 9px, transparent 9px, transparent 100%), linear-gradient(90deg, #245edb 8px, transparent 8px), linear-gradient(#1290e9 0, #34b4f5 2px, #1290e9 6px, #1290e9 24px, #0d6fc4 30px);
}

.tray-arrow svg {
  width: 18px;
  height: 18px;
}

.tray-icons {
  width: 88px;
  height: 18px;
  margin: 0 6px 0 2px;
}

/* message box */
.overlay {
  position: absolute;
  inset: 0 0 30px;
  display: flex;
  align-items: center;
  justify-content: center;
}

.dialog {
  width: 489px;
  border: 3px solid #0842d0;
  border-top: none;
  border-radius: 8px 8px 0 0;
  background: var(--face);
}

.dialog-title {
  height: 30px;
  display: flex;
  align-items: center;
  justify-content: space-between;
  margin: 0 -3px;
  padding: 2px 4px 0 8px;
  border-radius: 7px 7px 0 0;
  background: linear-gradient(#0a4cc8 0, #3b92ff 3px, #0a5fe8 6px, #0054e3 12px, #0463fa 22px, #0466ff 26px, #0043cc 30px);
}

.dialog-title h2 {
  font-family: var(--caption);
  font-size: 13px;
  font-weight: 600;
  color: #fff;
  text-shadow: 1px 1px #0f1089;
}

.dialog-close {
  width: 22px;
  height: 22px;
  padding: 1px;
  border: 1px solid #fff;
  border-radius: 3px;
  background: linear-gradient(135deg, #f0a088, #e04a24 50%, #c83812);
}

.dialog-body {
  display: flex;
  flex-direction: column;
  align-items: center;
  padding: 9px 6px 11px;
}

.message {
  align-self: stretch;
  display: flex;
  gap: 16px;
  margin-bottom: 16px;
  padding-left: 5px;
}

.message p {
  padding-top: 6px;
  line-height: 13px;
  white-space: nowrap;
}

.info {
  width: 34px;
  height: 34px;
}

.ok {
  width: 75px;
  height: 23px;
  padding: 2px;
  border: 1px solid #000;
  box-shadow: inset 1px 1px #fff, inset -1px -1px var(--dark), inset -2px -2px var(--shadow);
}

.ok span {
  display: block;
  border: 1px dotted #000;
  line-height: 15px;
}
```
